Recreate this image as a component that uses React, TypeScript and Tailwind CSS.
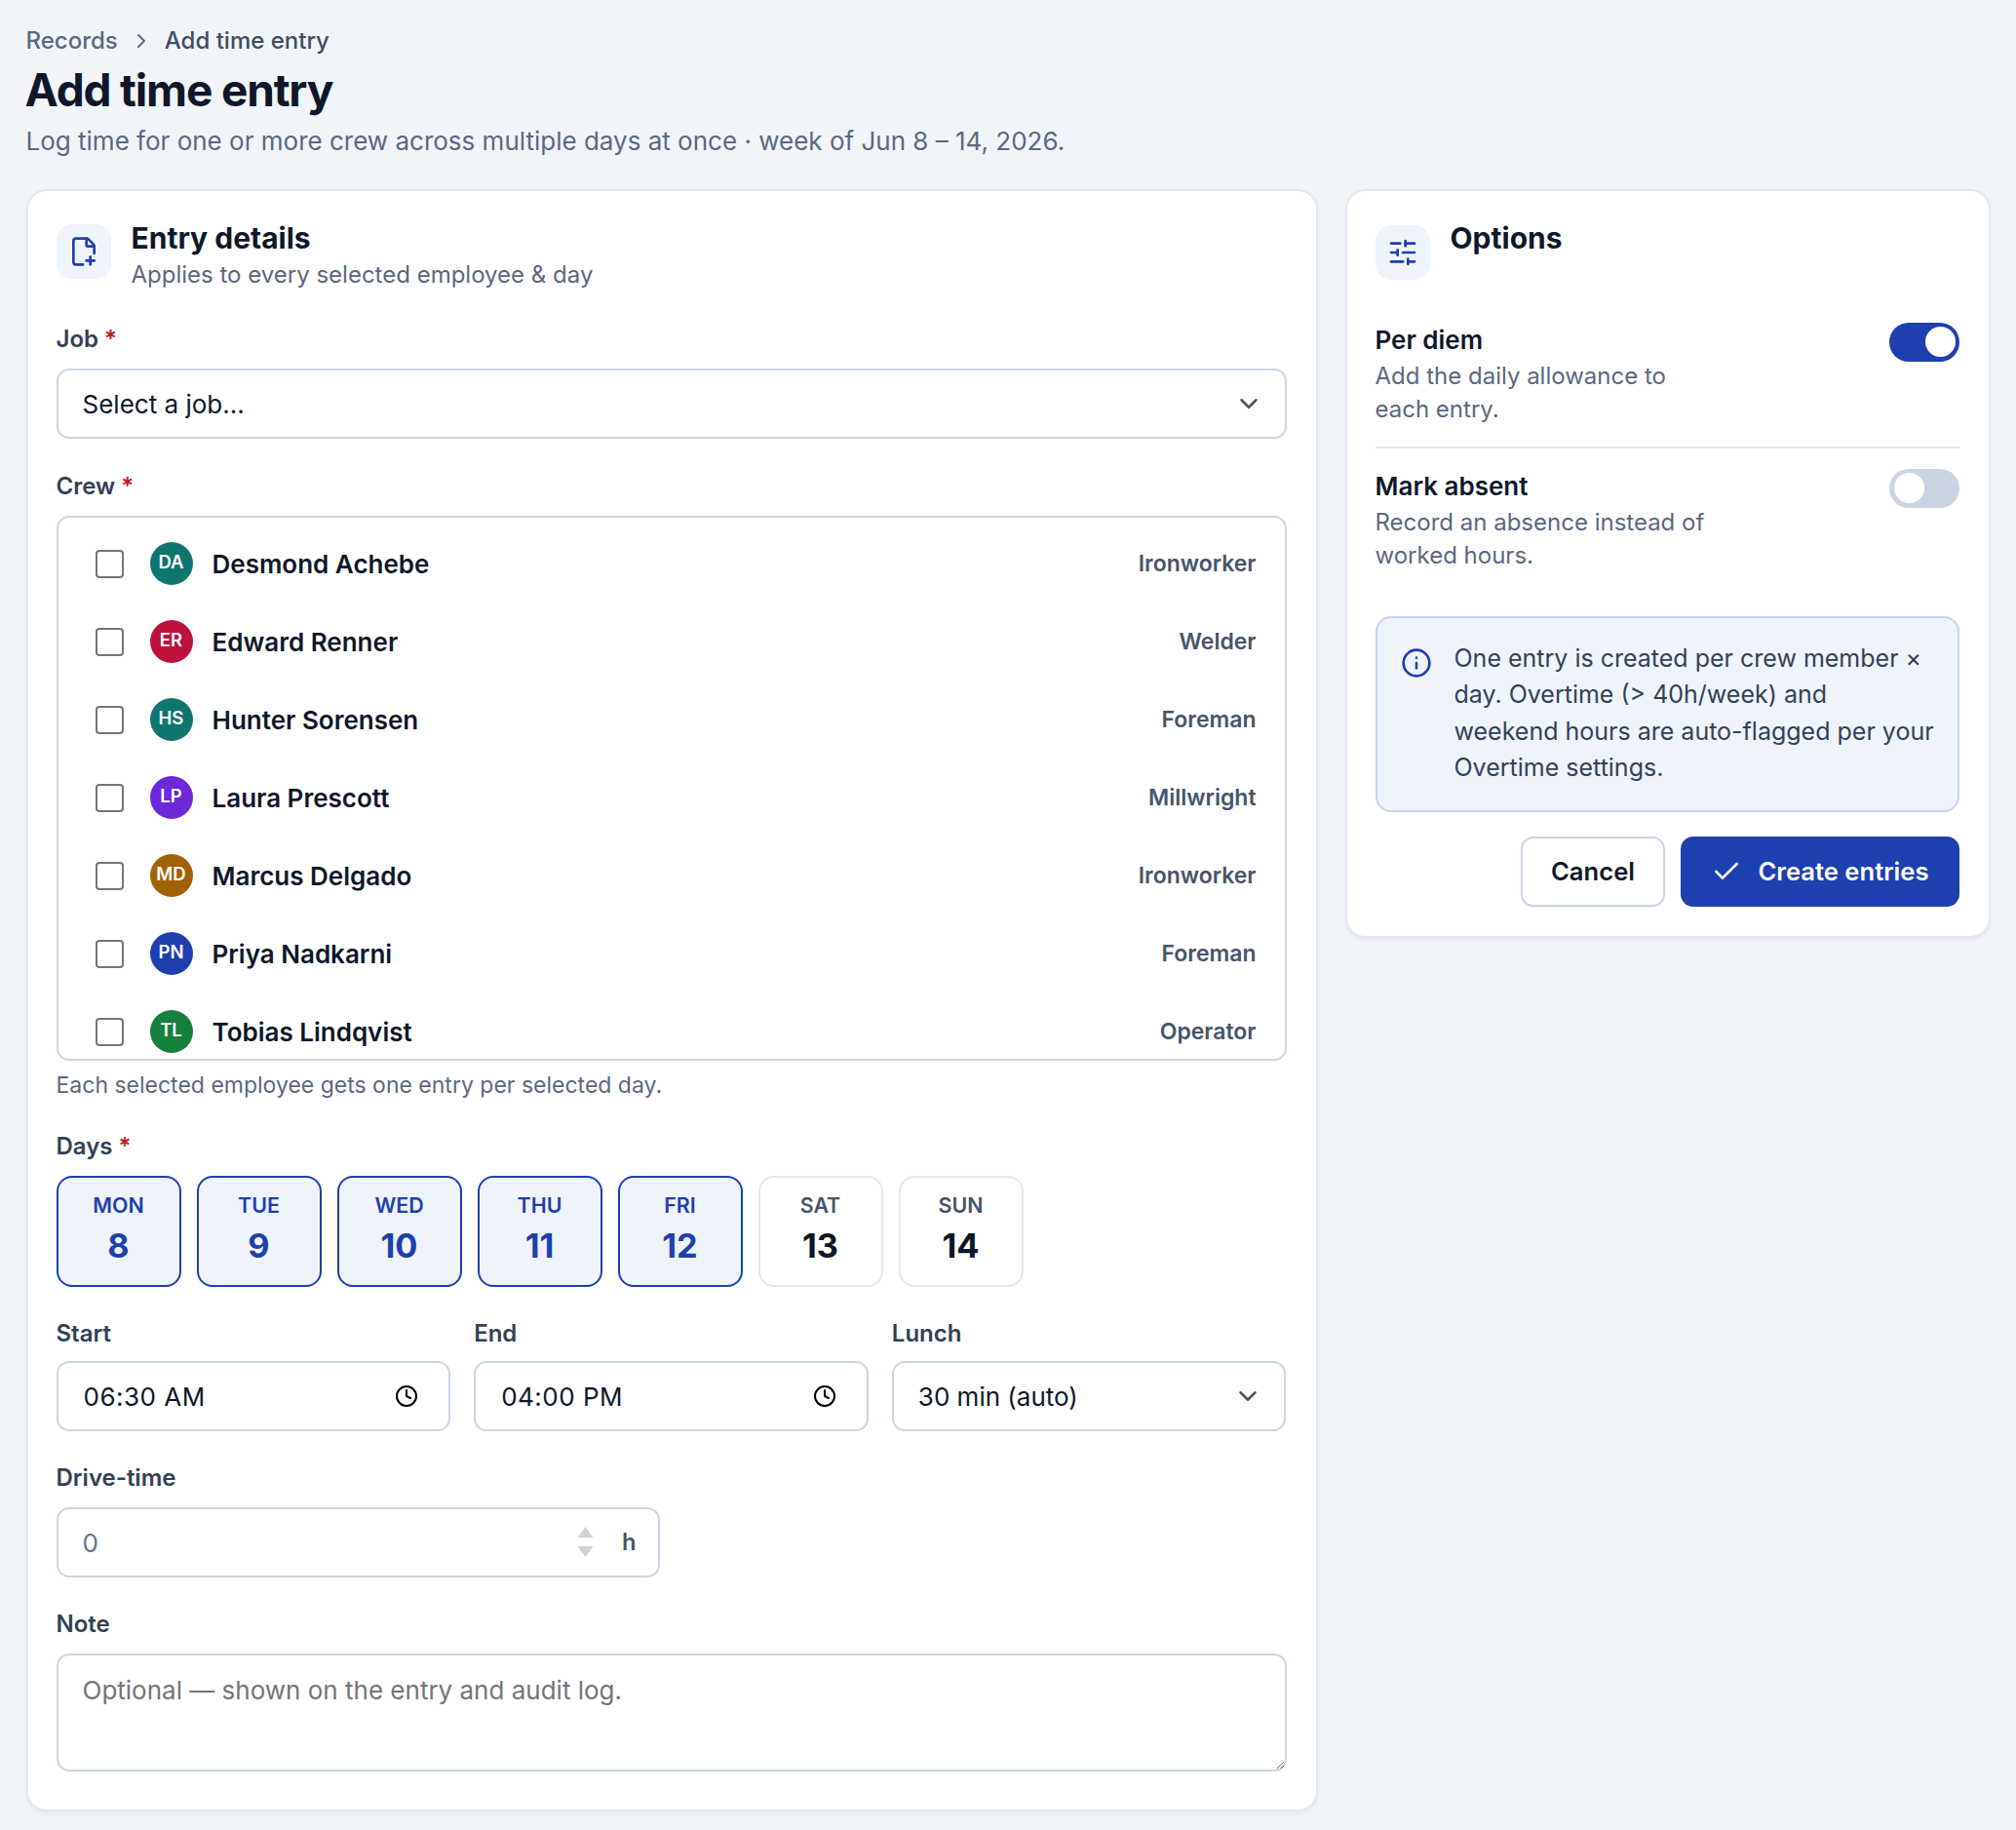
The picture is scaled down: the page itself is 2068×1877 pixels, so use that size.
import { ReactNode } from "react";
import { Check, ChevronDown, ChevronRight, Clock, Info, SlidersHorizontal } from "lucide-react";

const CREW = [
  { initials: "DA", name: "Desmond Achebe", role: "Ironworker", color: "bg-[#0f766e]" },
  { initials: "ER", name: "Edward Renner", role: "Welder", color: "bg-[#be123c]" },
  { initials: "HS", name: "Hunter Sorensen", role: "Foreman", color: "bg-[#0f766e]" },
  { initials: "LP", name: "Laura Prescott", role: "Millwright", color: "bg-[#6d28d9]" },
  { initials: "MD", name: "Marcus Delgado", role: "Ironworker", color: "bg-[#a16207]" },
  { initials: "PN", name: "Priya Nadkarni", role: "Foreman", color: "bg-[#1e40af]" },
  { initials: "TL", name: "Tobias Lindqvist", role: "Operator", color: "bg-[#15803d]" },
];

const DAYS = [
  { label: "MON", date: 8, active: true },
  { label: "TUE", date: 9, active: true },
  { label: "WED", date: 10, active: true },
  { label: "THU", date: 11, active: true },
  { label: "FRI", date: 12, active: true },
  { label: "SAT", date: 13, active: false },
  { label: "SUN", date: 14, active: false },
];

function FieldLabel({ children, required, tight }: { children: ReactNode; required?: boolean; tight?: boolean }) {
  return (
    <div className={`h-[28px] text-[24px] leading-[28px] font-semibold text-[#334155] ${tight ? "mb-[14px]" : "mb-[16px]"}`}>
      {children}
      {required && <span className="ml-[6px] text-[#b91c1c]">*</span>}
    </div>
  );
}

function IconBox({ children, className }: { children: ReactNode; className: string }) {
  return (
    <div className={`flex h-[56px] w-[56px] shrink-0 items-center justify-center rounded-[16px] bg-[#eff3fb] text-[#1e40af] ${className}`}>
      {children}
    </div>
  );
}

function FilePlusIcon() {
  return (
    <svg width="32" height="32" viewBox="0 0 24 24" fill="none" stroke="currentColor" strokeWidth="2" strokeLinecap="round" strokeLinejoin="round">
      <path d="M11.35 22H6a2 2 0 0 1-2-2V4a2 2 0 0 1 2-2h8a2.4 2.4 0 0 1 1.706.706l3.588 3.588A2.4 2.4 0 0 1 20 8v5.35" />
      <path d="M14 2v5a1 1 0 0 0 1 1h5" />
      <path d="M14 19h6" />
      <path d="M17 16v6" />
    </svg>
  );
}

function Toggle({ on }: { on?: boolean }) {
  return (
    <button
      className={`flex h-[40px] w-[72px] shrink-0 items-center rounded-full p-[4.5px] ${
        on ? "justify-end bg-[#1e40af]" : "justify-start bg-[#cbd5e1]"
      }`}
    >
      <span className="h-[31px] w-[31px] rounded-full bg-white" />
    </button>
  );
}

function TimeField({ value }: { value: string }) {
  return (
    <div className="flex h-[72px] items-center justify-between rounded-[13px] border-2 border-[#cbd5e1] bg-white pr-[31px] pl-[26px] text-[26px] text-[#0f172a]">
      <span className="tracking-[0.5px]">{value}</span>
      <Clock className="h-[24px] w-[24px] text-black" strokeWidth={2} />
    </div>
  );
}

export default function App() {
  return (
    <div className="min-h-[1877px] bg-[#f1f5f9] pt-[27px] pr-[26px] pb-[20px] pl-[26.5px] font-[Inter,sans-serif] text-[#0f172a]">
      <div className="flex h-[30px] items-center text-[24px] leading-[30px] font-medium">
        <span className="text-[#5b6880]">Records</span>
        <ChevronRight className="mx-[12px] h-[24px] w-[24px] text-[#5b6880]" />
        <span className="text-[#3f4c60]">Add time entry</span>
      </div>
      <h1 className="mt-[5px] ml-[-1px] text-[46px] leading-[60px] font-bold tracking-[-1.15px] text-[#0f172a]">
        Add time entry
      </h1>
      <p className="mt-[2px] text-[26px] leading-[42px] text-[#5b6880]">
        Log time for one or more crew across multiple days at once · week of Jun 8 – 14, 2026.
      </p>

      <div className="mt-[28px] grid grid-cols-[2fr_1fr] items-start gap-[28px]">
        {/* entry details */}
        <section className="rounded-[21px] border-2 border-[#e2e8f0] bg-white pt-[30px] pr-[30px] pb-[39px] pl-[29px] shadow-[0_2px_4px_rgba(15,23,42,0.06)]">
          <div className="flex gap-[21px]">
            <IconBox className="mt-[4px]">
              <FilePlusIcon />
            </IconBox>
            <div>
              <h2 className="text-[30px] leading-[36px] font-bold">Entry details</h2>
              <p className="mt-[3px] text-[24px] leading-[34px] text-[#5b6880]">
                Applies to every selected employee &amp; day
              </p>
            </div>
          </div>

          <div className="mt-[35px]">
            <FieldLabel required>Job</FieldLabel>
            <div className="flex h-[72px] items-center justify-between rounded-[13px] border-2 border-[#cbd5e1] bg-white pr-[22px] pl-[25px] text-[26px]">
              <span>Select a job...</span>
              <ChevronDown className="h-[30px] w-[30px] text-[#475569]" />
            </div>
          </div>

          <div className="mt-[35px]">
            <FieldLabel required>Crew</FieldLabel>
            <div className="h-[559px] overflow-hidden rounded-[13px] border-2 border-[#cbd5e1] bg-white pt-[7px] pr-[29px] pl-[38px]">
              {CREW.map((person) => (
                <div key={person.name} className="flex h-[80px] items-center">
                  <input
                    type="checkbox"
                    className="h-[29px] w-[29px] shrink-0 appearance-none rounded-[4px] border-2 border-[#767676] bg-white"
                  />
                  <div
                    className={`ml-[27px] flex h-[44px] w-[44px] shrink-0 items-center justify-center rounded-full pb-[3px] text-[18.5px] font-semibold text-white ${person.color}`}
                  >
                    {person.initials}
                  </div>
                  <span className="ml-[20px] flex-1 text-[26px] font-semibold text-[#0f172a]">{person.name}</span>
                  <span className="text-[23px] font-semibold text-[#475569]">{person.role}</span>
                </div>
              ))}
            </div>
            <p className="mt-[8px] text-[23px] leading-[34px] text-[#5b6880]">
              Each selected employee gets one entry per selected day.
            </p>
          </div>

          <div className="mt-[32px]">
            <FieldLabel required>Days</FieldLabel>
            <div className="flex gap-[16px]">
              {DAYS.map((day) => (
                <button
                  key={day.label}
                  className={`flex h-[114px] w-[128px] flex-col items-center rounded-[16px] border-2 pt-[14px] ${
                    day.active
                      ? "border-[#1e40af] bg-[#eff3fb] text-[#1e40af]"
                      : "border-[#e2e8f0] bg-white text-[#0f172a]"
                  }`}
                >
                  <span className={`text-[21.4px] leading-[28px] font-semibold ${day.active ? "" : "text-[#475569]"}`}>
                    {day.label}
                  </span>
                  <span className="mt-[6px] text-[34.3px] leading-[44px] font-bold">{day.date}</span>
                </button>
              ))}
            </div>
          </div>

          <div className="mt-[34px] grid grid-cols-3 gap-[24px]">
            <div>
              <FieldLabel tight>Start</FieldLabel>
              <TimeField value="06:30 AM" />
            </div>
            <div>
              <FieldLabel tight>End</FieldLabel>
              <TimeField value="04:00 PM" />
            </div>
            <div>
              <FieldLabel tight>Lunch</FieldLabel>
              <div className="flex h-[72px] items-center justify-between rounded-[13px] border-2 border-[#cbd5e1] bg-white pr-[22px] pl-[25px] text-[26px]">
                <span>30 min (auto)</span>
                <ChevronDown className="h-[30px] w-[30px] text-[#475569]" />
              </div>
            </div>
          </div>

          <div className="mt-[34px] grid grid-cols-2 gap-[24px]">
            <div>
              <FieldLabel>Drive-time</FieldLabel>
              <div className="flex h-[72px] items-center rounded-[13px] border-2 border-[#cbd5e1] bg-white pr-[22px] pl-[25px] text-[26px]">
                <span className="flex-1 text-[#64748b]">0</span>
                <svg width="17" height="36" viewBox="0 0 17 36" className="mr-[29px]" fill="#d1d1d1">
                  <path d="M8.5 2 L16.5 13 H0.5 Z" />
                  <path d="M0.5 22 H16.5 L8.5 33 Z" />
                </svg>
                <span className="text-[23.7px] font-semibold text-[#475569]">h</span>
              </div>
            </div>
          </div>

          <div className="mt-[34px]">
            <FieldLabel>Note</FieldLabel>
            <textarea
              className="block h-[121px] w-full rounded-[13px] border-2 border-[#cbd5e1] bg-white px-[25px] pt-[17px] pb-[18px] text-[26px] leading-[38px] placeholder:text-[#757575]"
              placeholder="Optional — shown on the entry and audit log."
            />
          </div>
        </section>

        {/* options */}
        <section className="rounded-[21px] border-2 border-[#e2e8f0] bg-white pt-[30px] pr-[30px] pb-[30px] pl-[29px] shadow-[0_2px_4px_rgba(15,23,42,0.06)]">
          <div className="flex gap-[21px]">
            <IconBox className="mt-[5px]">
              <SlidersHorizontal className="h-[32px] w-[32px]" />
            </IconBox>
            <h2 className="text-[30px] leading-[36px] font-bold">Options</h2>
          </div>

          <div className="mt-[43.5px] flex items-start justify-between border-b-2 border-[#e2e8f0] pb-[21px]">
            <div>
              <div className="text-[26px] leading-[36px] font-semibold">Per diem</div>
              <p className="mt-[2px] max-w-[340px] text-[24px] leading-[34px] text-[#5b6880]">
                Add the daily allowance to each entry.
              </p>
            </div>
            <Toggle on />
          </div>

          <div className="mt-[21px] flex items-start justify-between">
            <div>
              <div className="text-[26px] leading-[36px] font-semibold">Mark absent</div>
              <p className="mt-[2px] max-w-[340px] text-[24px] leading-[34px] text-[#5b6880]">
                Record an absence instead of worked hours.
              </p>
            </div>
            <Toggle />
          </div>

          <div className="mt-[45.5px] flex gap-[23px] rounded-[16px] border-2 border-[#c7d2ee] bg-[#eff3fb] pt-[23px] pr-[24px] pb-[25px] pl-[24px]">
            <Info className="mt-[7px] h-[32px] w-[32px] shrink-0 text-[#1e40af]" />
            <p className="text-[25px] leading-[37.3px] text-[#334155]">
              One entry is created per crew member × day. Overtime (&gt; 40h/week) and weekend hours are auto-flagged per
              your Overtime settings.
            </p>
          </div>

          <div className="mt-[25px] flex justify-end gap-[16px]">
            <button className="h-[72px] w-[148px] rounded-[13px] border-2 border-[#cbd5e1] bg-white text-[25.6px] font-semibold shadow-[0_1px_2px_rgba(15,23,42,0.08)]">
              Cancel
            </button>
            <button className="flex h-[72px] w-[286px] items-center justify-center gap-[16px] rounded-[13px] bg-[#1e40af] text-[25.6px] font-semibold text-white">
              <Check className="h-[32px] w-[32px]" />
              Create entries
            </button>
          </div>
        </section>
      </div>
    </div>
  );
}
